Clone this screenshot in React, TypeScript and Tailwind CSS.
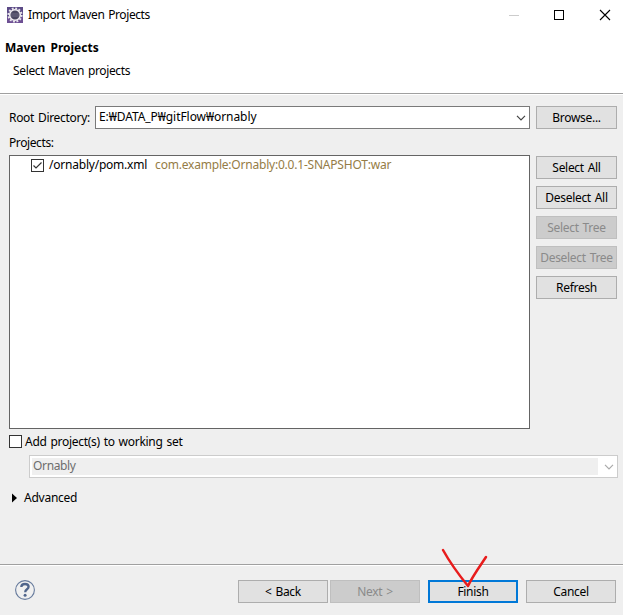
import type { ReactNode } from "react";

function Button({ children, className = "", disabled = false, primary = false }: { children: ReactNode; className?: string; disabled?: boolean; primary?: boolean }) {
  const tone = disabled
    ? "border border-[#bfbfbf] bg-[#cccccc] text-[#8a8a8a]"
    : primary
      ? "border-2 border-[#0078d7] bg-[#e1e1e1]"
      : "border border-[#adadad] bg-[#e1e1e1]";
  return (
    <button disabled={disabled} className={`flex h-[23px] shrink-0 items-center justify-center tracking-[-0.3px] whitespace-nowrap [word-spacing:1px] ${tone} ${className}`}>
      {children}
    </button>
  );
}

function Chevron({ color }: { color: string }) {
  return (
    <svg width="10" height="6" viewBox="0 0 10 6" fill="none" stroke={color} strokeWidth="1.2">
      <path d="M1 0.8 L5 4.8 L9 0.8" />
    </svg>
  );
}

function AppIcon() {
  return (
    <svg width="16" height="16" viewBox="0 0 16 16">
      <rect width="16" height="16" fill="#5b4a86" />
      <rect y="10" width="16" height="6" fill="#6d4f93" />
      <circle cx="8" cy="8" r="6.6" fill="none" stroke="#e8e6ec" strokeWidth="2" strokeDasharray="1.9 1.556" />
      <circle cx="8" cy="8" r="5.3" fill="#4a4760" stroke="#f2f0f2" strokeWidth="1.5" />
      <path d="M4 7h8M4 9h8" stroke="#85839a" strokeWidth="0.6" />
    </svg>
  );
}

export default function App() {
  return (
    <div className="flex h-[615px] w-[623px] flex-col overflow-hidden bg-[#efefef] font-['Noto_Sans','Noto_Sans_CJK_KR',sans-serif] text-[12px] leading-4 text-black">
      <header className="h-[94px] shrink-0 border-b border-[#a0a0a0] bg-white">
        <div className="flex h-[29px] items-center pl-[7px]">
          <AppIcon />
          <span className="ml-[5px] grow tracking-[-0.4px] whitespace-nowrap [word-spacing:1px]">Import Maven Projects</span>
          <svg width="102" height="12" viewBox="0 0 102 12" fill="none" className="mr-[12px]">
            <path d="M0 6.5h10" stroke="#cccccc" />
            <rect x="45.5" y="1.5" width="9" height="9" stroke="#000" />
            <path d="M91 1l10 10M101 1l-10 10" stroke="#000" strokeWidth="1.1" />
          </svg>
        </div>
        <h1 className="mt-[11px] pl-[5px] font-bold [word-spacing:2px]">Maven Projects</h1>
        <p className="mt-[7px] pl-[13px] tracking-[-0.35px] [word-spacing:1px]">Select Maven projects</p>
      </header>

      <main className="flex h-[470px] shrink-0 flex-col border-t border-white pl-[9px]">
        <div className="mt-[11px] flex items-center">
          <label className="w-[86px] tracking-[-0.3px] whitespace-nowrap [word-spacing:1px]">Root Directory:</label>
          <div className="flex h-[23px] w-[435px] items-center justify-between border border-[#7a7a7a] bg-white pr-[3px] pl-[3px]">
            <span className="-mt-0.5 tracking-[-0.06px]">E:₩DATA_P₩gitFlow₩ornably</span>
            <Chevron color="#444" />
          </div>
          <Button className="ml-[6px] w-[81px]">Browse...</Button>
        </div>
        <div className="mt-[6px] h-5 leading-4 tracking-[-0.4px]">Projects:</div>
        <div className="flex">
          <div className="h-[274px] w-[521px] border border-[#646464] bg-white pt-px pl-[21px]">
            <div className="flex h-4 items-center">
              <svg width="13" height="13" viewBox="0 0 13 13" fill="none" className="mt-px">
                <rect x="0.5" y="0.5" width="12" height="12" stroke="#333" />
                <path d="M2.5 6.5L5 9L10.5 3.5" stroke="#333" strokeWidth="1.2" />
              </svg>
              <span className="ml-[5px] tracking-[-0.22px] whitespace-nowrap">/ornably/pom.xml</span>
              <span className="ml-[8px] tracking-[-0.21px] whitespace-nowrap text-[#957c46]">com.example:Ornably:0.0.1-SNAPSHOT:war</span>
            </div>
          </div>
          <div className="mt-px ml-[6px] flex w-[81px] flex-col gap-[7px]">
            <Button>Select All</Button>
            <Button>Deselect All</Button>
            <Button disabled>Select Tree</Button>
            <Button disabled>Deselect Tree</Button>
            <Button>Refresh</Button>
          </div>
        </div>
        <div className="mt-[5px] flex h-4">
          <div className="mt-px h-[13px] w-[13px] border border-[#333] bg-white" />
          <span className="ml-[3px] tracking-[-0.28px] [word-spacing:1px]">Add project(s) to working set</span>
        </div>
        <div className="mt-[5px] ml-5 flex h-[23px] w-[589px] items-center border border-[#cccccc] bg-white pl-[2px] text-[#6d6d6d]">
          <div className="flex h-[17px] w-[566px] items-center bg-[#efefef] pl-px tracking-[-0.35px]"><span className="-mt-0.5">Ornably</span></div>
          <div className="ml-[6px]"><Chevron color="#aaa" /></div>
        </div>
        <div className="mt-[12px] flex h-4 items-center pl-[3px]">
          <svg width="5" height="10" viewBox="0 0 5 10"><path d="M0 0.5L5 5L0 9.5Z" fill="#000" /></svg>
          <span className="ml-[7px] tracking-[-0.25px]">Advanced</span>
        </div>
      </main>

      <footer className="flex grow border-t border-[#a0a0a0] pl-[15px]">
        <div className="-ml-[15px] flex w-[623px] shrink-0 border-t border-white pt-[14px] pl-[15px]">
          <svg width="20" height="20" viewBox="0 0 20 20" fill="none">
            <circle cx="10" cy="10" r="9.4" fill="#f0f0f0" stroke="#667a9c" strokeWidth="1.1" />
            <path d="M6.3 7C6.4 4.8 8 4 10 4c2.3 0 3.6 1.1 3.6 2.8 0 2.6-3.4 2.3-3.4 5.4" stroke="#50658b" strokeWidth="2.3" />
            <circle cx="10.1" cy="15.2" r="1.5" fill="#50658b" />
          </svg>
          <Button className="ml-[203px] w-[90px]">&lt; Back</Button>
          <Button disabled className="ml-[2px] w-[90px]">Next &gt;</Button>
          <div className="relative ml-[8px]">
            <Button primary className="w-[90px]">Finish</Button>
            <svg width="50" height="44" viewBox="0 0 50 44" fill="none" className="absolute -top-[34px] left-[12px]">
              <path d="M3 4C8 13 19 29 28 40C32 31 40 20 46 11" stroke="#e81c1c" strokeWidth="2.5" strokeLinecap="round" strokeLinejoin="round" />
            </svg>
          </div>
          <Button className="ml-[8px] w-[90px]">Cancel</Button>
        </div>
      </footer>
    </div>
  );
}
